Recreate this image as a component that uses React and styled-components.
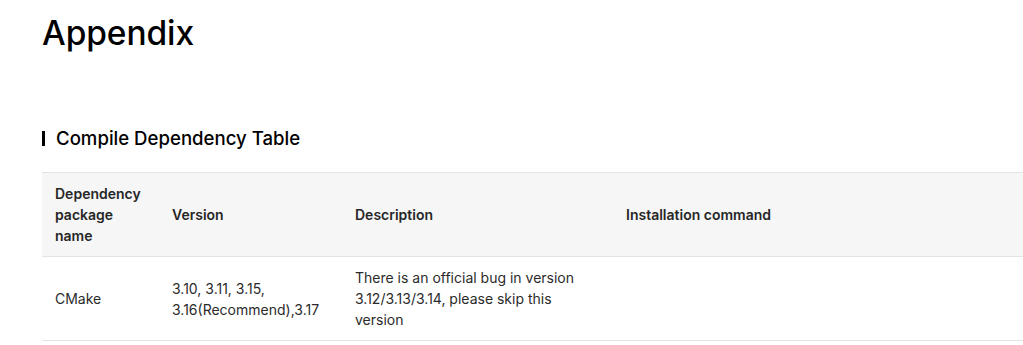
import React from "react";
import styled, { createGlobalStyle } from "styled-components";

const GlobalStyle = createGlobalStyle`
  html, body {
    margin: 0;
    padding: 0;
    background: #ffffff;
    overflow: hidden;
  }
  body {
    font-family: Inter, "Noto Sans", "Liberation Sans", sans-serif;
    color: #1a1a1a;
  }
`;

const Page = styled.div`
  padding: 13px 0 0 42px;
`;

const Title = styled.h1`
  margin: 0;
  font-size: 33.5px;
  line-height: 40px;
  font-weight: 500;
  color: #000;
  letter-spacing: -0.1px;
`;

const SectionTitle = styled.h2`
  margin: 71px 0 0;
  font-size: 18.6px;
  line-height: 28px;
  font-weight: 500;
  color: #000;
  display: flex;
  align-items: center;

  &::before {
    content: "";
    display: block;
    width: 3px;
    height: 15px;
    background: #000;
    margin-right: 11px;
    margin-top: 1px;
  }
`;

const Table = styled.table`
  margin-top: 20px;
  width: 1120px;
  table-layout: fixed;
  border-collapse: collapse;
  font-size: 14px;
  line-height: 21px;
`;

const HeadCell = styled.th`
  box-sizing: border-box;
  width: ${(p) => p.$w || "auto"};
  text-align: left;
  vertical-align: middle;
  font-weight: 600;
  color: #262626;
  background: #f6f6f6;
  padding: 10px 13px;
  border-top: 1px solid #e4e4e4;
  border-bottom: 1px solid #e4e4e4;
`;

const Cell = styled.td`
  text-align: left;
  vertical-align: middle;
  color: #2b2b2b;
  padding: 10px 13px;
  border-bottom: 1px solid #e4e4e4;
`;

const columns = [
  { label: "Dependency package name", w: "117px" },
  { label: "Version", w: "183px" },
  { label: "Description", w: "271px" },
  { label: "Installation command" },
];

const rows = [
  [
    "CMake",
    "3.10, 3.11, 3.15, 3.16(Recommend),3.17",
    "There is an official bug in version 3.12/3.13/3.14, please skip this version",
    "",
  ],
];

export default function App() {
  return (
    <>
      <GlobalStyle />
      <Page>
        <Title>Appendix</Title>
        <SectionTitle>Compile Dependency Table</SectionTitle>
        <Table>
          <thead>
            <tr>
              {columns.map((c) => (
                <HeadCell key={c.label} $w={c.w}>
                  {c.label}
                </HeadCell>
              ))}
            </tr>
          </thead>
          <tbody>
            {rows.map((r, i) => (
              <tr key={i}>
                {r.map((v, j) => (
                  <Cell key={j}>{v}</Cell>
                ))}
              </tr>
            ))}
          </tbody>
        </Table>
      </Page>
    </>
  );
}
